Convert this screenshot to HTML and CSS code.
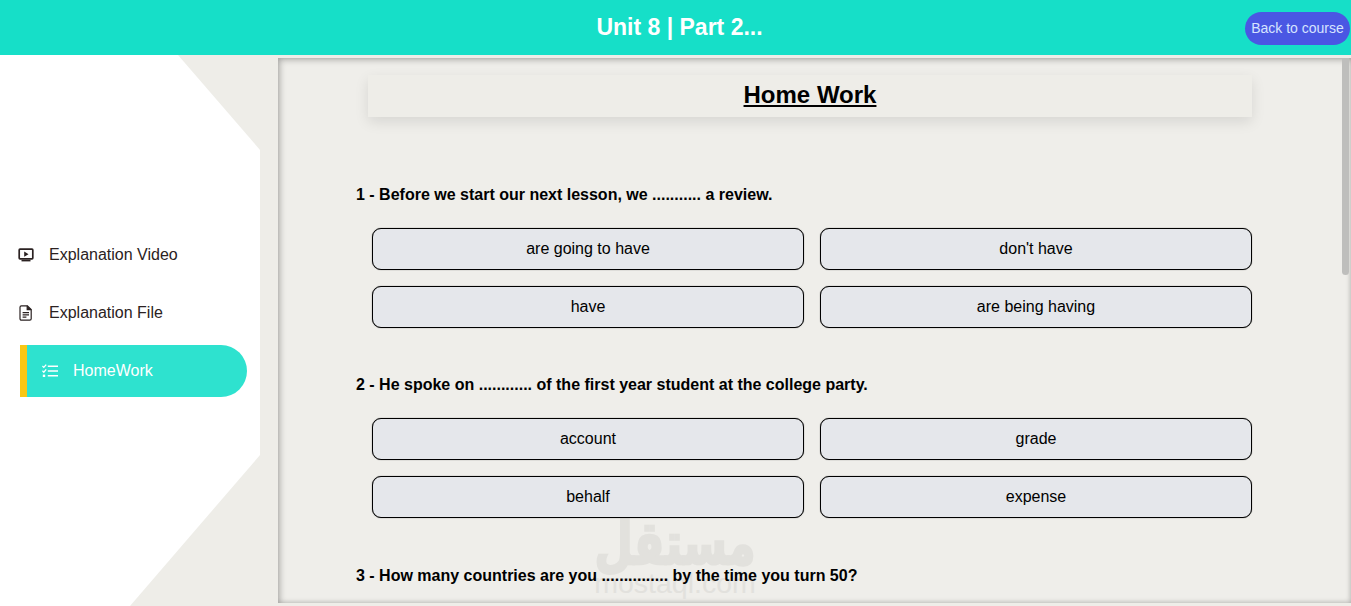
FILE: index.html
```html
<!DOCTYPE html>
<html lang="en">
<head>
<meta charset="utf-8">
<title>Unit 8 | Part 2...</title>
<link rel="stylesheet" href="styles.css">
</head>
<body>
<header class="topbar">
  <h1 class="topbar-title">Unit 8 | Part 2...</h1>
  <a class="back-btn">Back to course</a>
</header>
<div class="layout">
  <aside class="sidebar">
    <nav class="nav">
      <a class="nav-item">
        <svg class="nav-icon" viewBox="0 0 16 16" fill="none" stroke="currentColor" stroke-width="1.7"><rect x="1.2" y="2.2" width="13.6" height="9.6" rx=".8"/><path d="M6.2 4.6l4.3 2.6-4.3 2.6z" fill="currentColor" stroke="none"/><path d="M3.5 13.6h9" stroke-width="1.6"/></svg>
        <span>Explanation Video</span>
      </a>
      <a class="nav-item">
        <svg class="nav-icon" viewBox="0 0 16 16" fill="none" stroke="currentColor" stroke-width="1.2"><path d="M3.4 .8h6l3.8 3.8v9.2a1.4 1.4 0 0 1-1.4 1.4H3.4A1.4 1.4 0 0 1 2 13.8V2.2A1.4 1.4 0 0 1 3.4 .8z"/><path d="M9.2 .8v3.8h4" fill="currentColor"/><path d="M4.6 7.6h6.4M4.6 9.9h6.4M4.6 12.2h3.8"/></svg>
        <span>Explanation File</span>
      </a>
      <a class="nav-item is-active">
        <svg class="nav-icon" viewBox="0 0 16 16" fill="none" stroke="currentColor" stroke-width="1.6"><path d="M5.8 3.2H16M5.8 8H16M5.8 12.8H16"/><path d="M.4 3l1.4 1.4L4.2 1.6M.4 7.8l1.4 1.4 2.4-2.8" stroke-width="1.3"/><rect x=".8" y="11.6" width="2.4" height="2.4" fill="currentColor" stroke="none"/></svg>
        <span>HomeWork</span>
      </a>
    </nav>
  </aside>
  <main class="panel">
    <div class="watermark" aria-hidden="true">
      <div class="watermark-ar" lang="ar" dir="rtl">مستقل</div>
      <div class="watermark-en">mostaql.com</div>
    </div>
    <div class="panel-inner">
      <h2 class="page-title"><span class="page-title-text">Home Work</span></h2>
      <section class="question">
        <p class="question-text">1 - Before we start our next lesson, we ........... a review.</p>
        <div class="options">
          <button class="option">are going to have</button>
          <button class="option">don't have</button>
          <button class="option">have</button>
          <button class="option">are being having</button>
        </div>
      </section>
      <section class="question">
        <p class="question-text">2 - He spoke on ............ of the first year student at the college party.</p>
        <div class="options">
          <button class="option">account</button>
          <button class="option">grade</button>
          <button class="option">behalf</button>
          <button class="option">expense</button>
        </div>
      </section>
      <section class="question">
        <p class="question-text">3 - How many countries are you ............... by the time you turn 50?</p>
      </section>
    </div>
    <div class="scroll-thumb"></div>
  </main>
</div>
</body>
</html>
```

FILE: styles.css
```css
* { box-sizing: border-box; }
html, body { height: 100%; }
body {
  margin: 0;
  height: 606px;
  overflow: hidden;
  background: #eeede8;
  font-family: "Liberation Sans", Arial, sans-serif;
  color: #000;
}
.topbar {
  height: 55px;
  background: #16dfc8;
  display: flex;
  align-items: center;
  justify-content: flex-end;
  padding-right: 1px;
  position: relative;
}
.topbar-title {
  position: absolute;
  left: 0;
  width: 1359px;
  margin: 0;
  text-align: center;
  font-size: 23px;
  font-weight: 700;
  color: #fff;
}
.back-btn {
  width: 105px;
  height: 33px;
  border-radius: 17px;
  background: #4a57e3;
  color: #d6e4ff;
  font-size: 14px;
  display: flex;
  align-items: center;
  justify-content: center;
  white-space: nowrap;
  margin-top: 1px;
}
.layout {
  display: flex;
  height: 551px;
}
.sidebar {
  width: 278px;
  flex: none;
  position: relative;
}
.sidebar::before {
  content: "";
  position: absolute;
  inset: 0;
  background: #fff;
  clip-path: polygon(0 0, 178px 0, 260px 95px, 260px 400px, 130px 551px, 0 551px);
}
.nav {
  position: relative;
  padding: 174px 0 0 18px;
  display: flex;
  flex-direction: column;
  gap: 6px;
}
.nav-item {
  display: flex;
  align-items: center;
  gap: 15px;
  height: 52px;
  width: 229px;
  font-size: 16px;
  color: #2b2222;
}
.nav-icon { width: 16px; height: 16px; flex: none; }
.is-active {
  margin-left: 2px;
  width: 227px;
  padding-left: 15px;
  background: #2ee2cf;
  border-left: 7px solid #f9c714;
  border-radius: 0 26px 26px 0;
  color: #fff;
}
.panel {
  flex: 1;
  margin-top: 3px;
  height: 545px;
  overflow: hidden;
  position: relative;
  background: #efeeea;
  box-shadow: inset 2px 2px 6px rgba(0, 0, 0, .25), inset -1px -1px 5px rgba(0, 0, 0, .14);
}
.scroll-thumb {
  position: absolute;
  top: 0;
  right: 2px;
  width: 7px;
  height: 217px;
  background: #bebebc;
  border-radius: 0 0 4px 4px;
}
.panel-inner {
  position: relative;
  padding: 17px 87px 0 78px;
}
.page-title {
  margin: 0 12px;
  height: 42px;
  line-height: 39px;
  text-align: center;
  font-size: 24px;
  font-weight: 700;
  background: #eeede8;
  box-shadow: 0 5px 14px rgba(0, 0, 0, .1);
}
.page-title-text { text-decoration: underline; }
.question { margin-bottom: 48px; }
.page-title + .question { margin-top: 69px; }
.question + .question { margin-top: 0; }
.question:last-child { padding-top: 1px; }
.question-text {
  margin: 0 0 24px;
  font-size: 16px;
  line-height: 18px;
  font-weight: 700;
}
.options {
  display: grid;
  grid-template-columns: 432px 432px;
  gap: 16px;
  padding-left: 16px;
}
.option {
  height: 42px;
  border: 1px solid #000;
  border-radius: 9px;
  background: #e5e7eb;
  box-shadow: 0 0 1px rgba(0, 0, 0, .7);
  font-family: inherit;
  font-size: 16px;
  color: #000;
  padding: 0;
}
.watermark {
  position: absolute;
  left: 297px;
  top: 456px;
  width: 200px;
  text-align: center;
  color: #e2e1dd;
}
.watermark-ar {
  font-family: "DejaVu Sans", sans-serif;
  font-weight: 700;
  font-size: 44px;
  line-height: 60px;
  -webkit-text-stroke: 2px #e2e1dd;
  transform: scaleY(1.35);
}
.watermark-en {
  font-size: 28.5px;
  line-height: 28px;
  margin-top: -5px;
}
```
